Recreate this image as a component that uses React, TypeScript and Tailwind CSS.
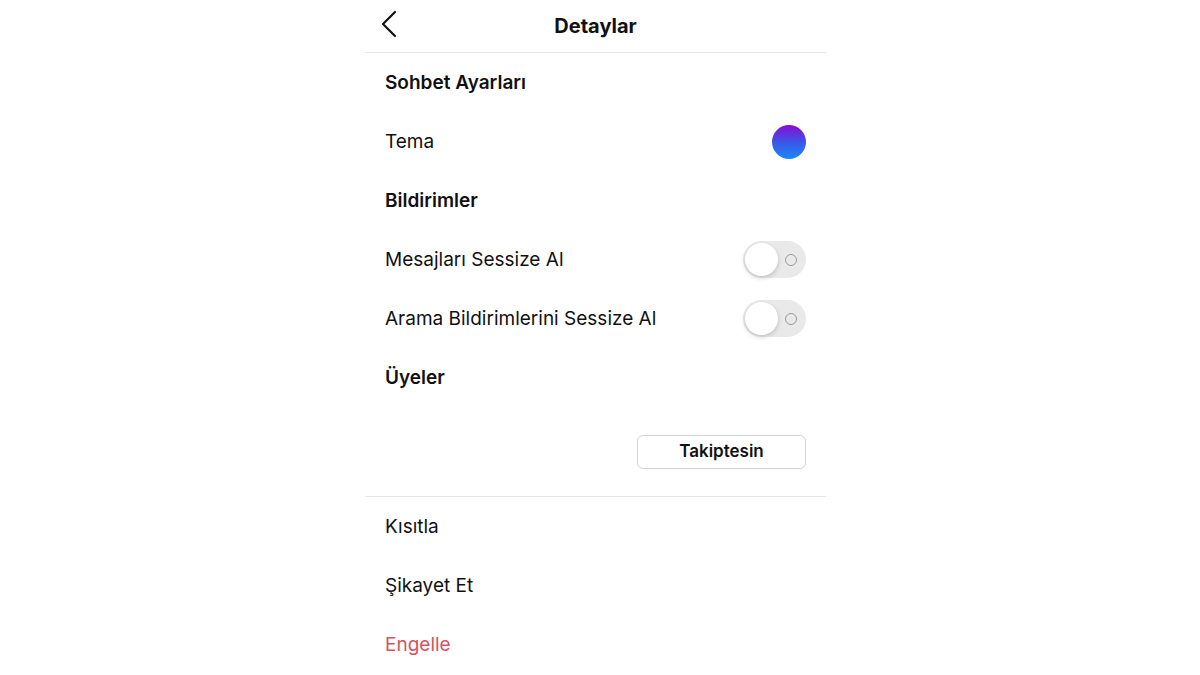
import { useState } from 'react';

const font = { fontFamily: 'Inter, "Noto Sans", "Liberation Sans", sans-serif' };

function Toggle({ on, onChange }: { on: boolean; onChange: () => void }) {
  return (
    <button
      onClick={onChange}
      className={`relative w-[63px] h-[37px] rounded-full ${on ? 'bg-[#34c759]' : 'bg-[#e9e9ea]'}`}
    >
      {/* iOS erişilebilirlik halkası */}
      <span className="absolute right-[9px] top-1/2 -translate-y-1/2 w-[12px] h-[12px] rounded-full border border-[#9a9a9a]" />
      <span
        className={`absolute top-[2px] w-[33px] h-[33px] rounded-full bg-white shadow-[0_2px_5px_rgba(0,0,0,0.18)] ${
          on ? 'left-[28px]' : 'left-[2px]'
        }`}
      />
    </button>
  );
}

export default function App() {
  const [muteMessages, setMuteMessages] = useState(false);
  const [muteCalls, setMuteCalls] = useState(false);

  return (
    <div className="min-h-screen bg-white flex justify-center pr-[9px]" style={font}>
      <div className="w-[461px] flex flex-col text-[#111111]">
        {/* başlık */}
        <header className="relative h-[53px] flex items-center justify-center border-b border-[#e6e6e6]">
          <button className="absolute left-[13px] top-[10px]">
            <svg width="20" height="28" viewBox="0 0 20 28" fill="none">
              <path
                d="M17 2 L5 14 L17 26"
                stroke="#111"
                strokeWidth="2.2"
                strokeLinecap="round"
                strokeLinejoin="round"
              />
            </svg>
          </button>
          <h1 className="text-[20px] font-bold">Detaylar</h1>
        </header>

        <div className="px-5">
          <div className="h-[59px] flex items-center pt-[2px] text-[19px] font-semibold">Sohbet Ayarları</div>
          <div className="h-[59px] flex items-center justify-between text-[19px]">
            <span className="pt-[2px]">Tema</span>
            <span className="w-[34px] h-[34px] rounded-full bg-[linear-gradient(to_bottom,#8a0bd2,#3a55e8,#1c8af3)]" />
          </div>
          <div className="h-[59px] flex items-center pt-[2px] text-[19px] font-semibold">Bildirimler</div>
          <div className="h-[59px] flex items-center justify-between text-[19px]">
            <span className="pt-[2px]">Mesajları Sessize Al</span>
            <Toggle on={muteMessages} onChange={() => setMuteMessages(!muteMessages)} />
          </div>
          <div className="h-[59px] flex items-center justify-between text-[19px]">
            <span className="pt-[2px]">Arama Bildirimlerini Sessize Al</span>
            <Toggle on={muteCalls} onChange={() => setMuteCalls(!muteCalls)} />
          </div>
          <div className="h-[59px] flex items-center pt-[2px] text-[19px] font-semibold">Üyeler</div>
          <div className="h-[89px] flex items-center justify-end">
            <button className="w-[169px] h-[34px] pt-[1px] rounded-[6px] border border-[#d2d2d2] text-[17px] font-semibold">
              Takiptesin
            </button>
          </div>
        </div>

        <div className="border-t border-[#e6e6e6] px-5">
          <div className="h-[59px] flex items-center pt-[2px] text-[19px]">Kısıtla</div>
          <div className="h-[59px] flex items-center pt-[2px] text-[19px]">Şikayet Et</div>
          <div className="h-[59px] flex items-center pt-[2px] text-[19px] text-[#d6525c]">Engelle</div>
        </div>
      </div>
    </div>
  );
}
